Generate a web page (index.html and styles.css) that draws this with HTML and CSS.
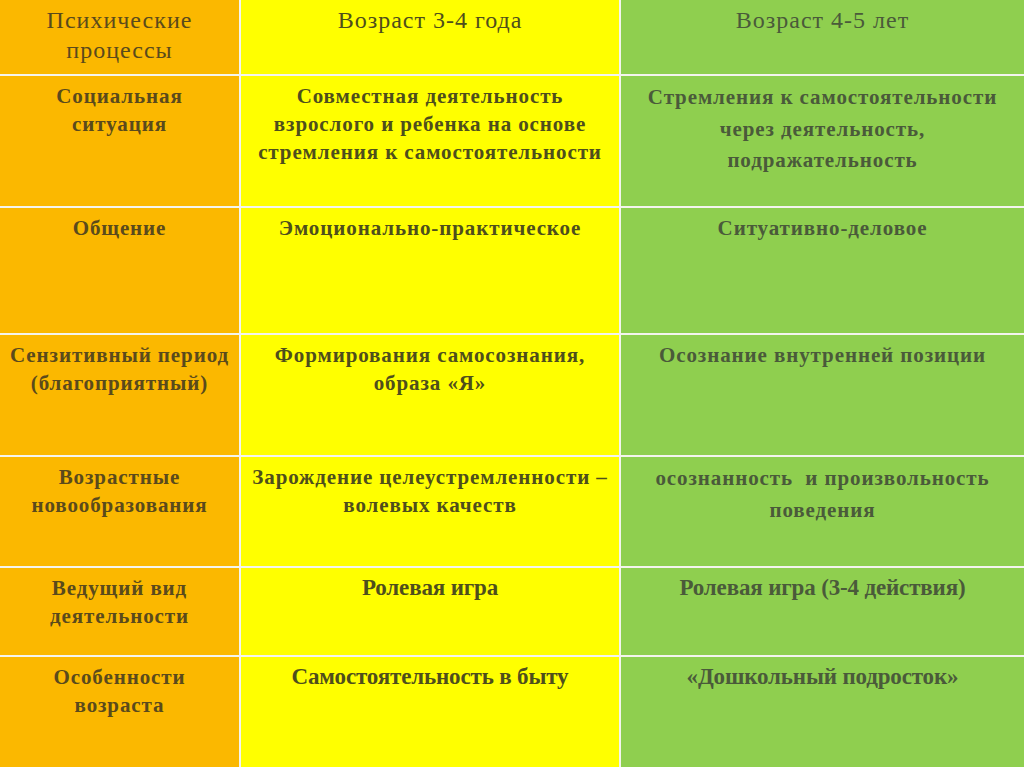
FILE: index.html
```html
<!DOCTYPE html>
<html lang="ru">
<head>
<meta charset="utf-8">
<title>Возрастные особенности</title>
<link rel="stylesheet" href="styles.css">
</head>
<body>
<div class="table">
  <div class="cell c1 head">Психические<br>процессы</div>
  <div class="cell c2 head">Возраст 3-4 года</div>
  <div class="cell c3 head">Возраст 4-5 лет</div>

  <div class="cell c1">Социальная<br>ситуация</div>
  <div class="cell c2">Совместная деятельность<br>взрослого и ребенка на основе<br>стремления к самостоятельности</div>
  <div class="cell c3 loose">Стремления к самостоятельности<br>через деятельность,<br>подражательность</div>

  <div class="cell c1">Общение</div>
  <div class="cell c2">Эмоционально-практическое</div>
  <div class="cell c3">Ситуативно-деловое</div>

  <div class="cell c1">Сензитивный период<br>(благоприятный)</div>
  <div class="cell c2">Формирования самосознания,<br>образа «Я»</div>
  <div class="cell c3">Осознание внутренней позиции</div>

  <div class="cell c1">Возрастные<br>новообразования</div>
  <div class="cell c2">Зарождение целеустремленности –<br>волевых качеств</div>
  <div class="cell c3 loose">осознанность&nbsp; и произвольность<br>поведения</div>

  <div class="cell c1">Ведущий вид<br>деятельности</div>
  <div class="cell c2 tight">Ролевая игра</div>
  <div class="cell c3 tight">Ролевая игра (3-4 действия)</div>

  <div class="cell c1">Особенности<br>возраста</div>
  <div class="cell c2 tight">Самостоятельность в быту</div>
  <div class="cell c3 tight">«Дошкольный подросток»</div>
</div>
</body>
</html>
```
FILE: styles.css
```css
html, body {
  margin: 0;
  padding: 0;
  background: #ffffff;
}

.table {
  width: 1024px;
  height: 767px;
  display: grid;
  grid-template-columns: 239px 378px 403px;
  grid-template-rows: 74px 130px 125px 120px 109px 87px 110px;
  gap: 2px;
  background: #f4f4ee;
  overflow: hidden;
}

.cell {
  font-family: "Liberation Serif", "Times New Roman", serif;
  font-weight: bold;
  font-size: 21px;
  letter-spacing: 0.9px;
  line-height: 28px;
  text-align: center;
  padding-top: 6px;
  white-space: nowrap;
}

.head {
  font-weight: normal;
  font-size: 24px;
  letter-spacing: 1px;
  line-height: 30px;
  padding-top: 5px;
}

.c1 {
  background: #fbb800;
  color: #5a4a1c;
}

.c2 {
  background: #ffff00;
  color: #4e4e1c;
}

.c3 {
  background: #8fcf4f;
  color: #4a5a3a;
}

.loose {
  line-height: 31.5px;
  padding-top: 6px;
}

.tight {
  font-size: 23px;
  letter-spacing: -0.15px;
}
```
